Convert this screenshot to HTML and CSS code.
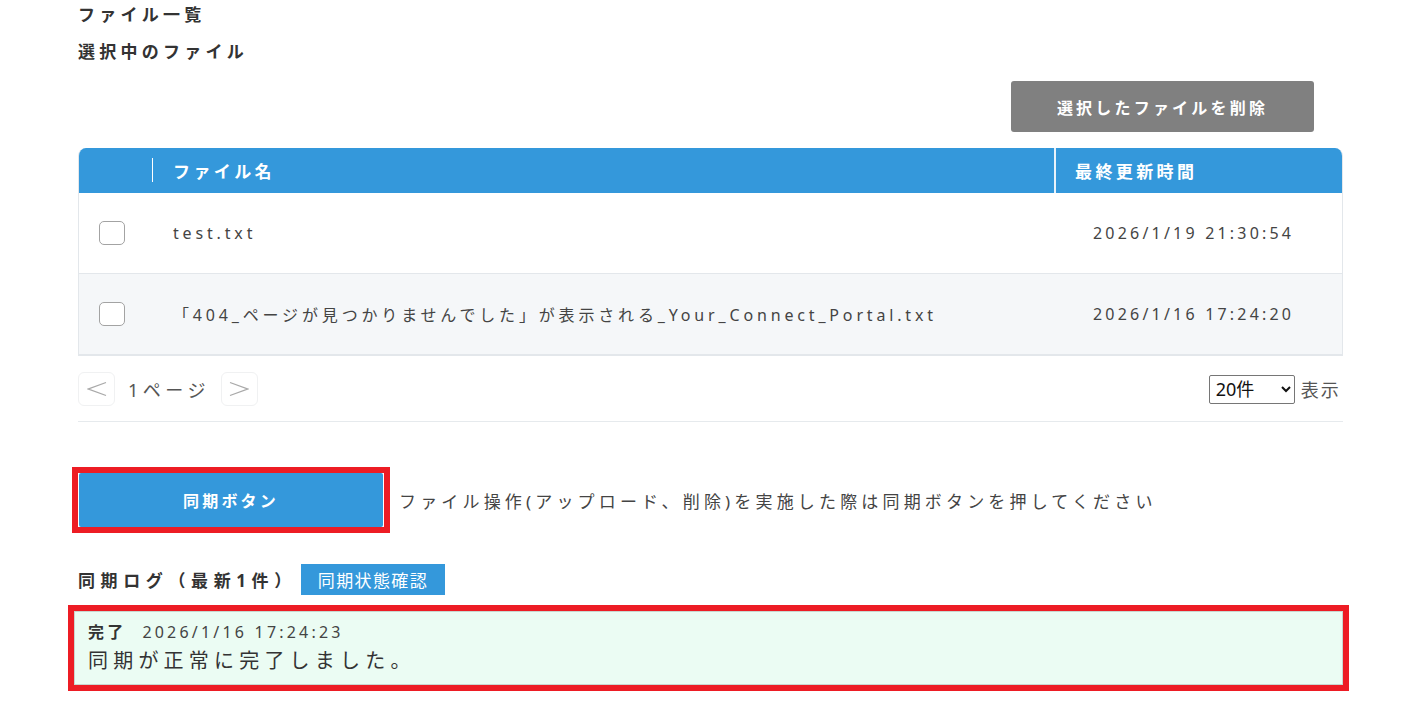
FILE: index.html
```html
<!DOCTYPE html>
<html lang="ja">
<head>
    <meta charset="UTF-8">
    <meta name="viewport" content="width=device-width, initial-scale=1.0">
    <title>ファイル一覧</title>
    <link rel="stylesheet" href="styles.css">
</head>
<body>
    <div class="page">
        <h2 class="section-title">ファイル一覧</h2>
        <h3 class="section-title sub">選択中のファイル</h3>

        <div class="actions">
            <button type="button" class="btn-delete">選択したファイルを削除</button>
        </div>

        <div class="table-wrap">
            <table class="file-table">
                <colgroup>
                    <col class="w-check">
                    <col>
                    <col class="w-date">
                </colgroup>
                <thead>
                    <tr>
                        <th class="col-check"></th>
                        <th class="col-name"><span class="divider"></span>ファイル名</th>
                        <th class="col-date">最終更新時間</th>
                    </tr>
                </thead>
                <tbody>
                    <tr>
                        <td class="col-check"><input type="checkbox" class="check"></td>
                        <td class="col-name">test.txt</td>
                        <td class="col-date">2026/1/19 21:30:54</td>
                    </tr>
                    <tr class="alt">
                        <td class="col-check"><input type="checkbox" class="check"></td>
                        <td class="col-name">「404_ページが見つかりませんでした」が表示される_Your_Connect_Portal.txt</td>
                        <td class="col-date">2026/1/16 17:24:20</td>
                    </tr>
                </tbody>
            </table>
        </div>

        <div class="pager">
            <div class="pager-left">
                <button type="button" class="page-btn">
                    <svg width="20" height="16" viewBox="0 0 20 16"><polyline points="19,1.5 1.5,8 19,14.5" fill="none" stroke="#a9a9a9" stroke-width="1.3"/></svg>
                </button>
                <span class="page-label">1ページ</span>
                <button type="button" class="page-btn">
                    <svg width="20" height="16" viewBox="0 0 20 16"><polyline points="1,1.5 18.5,8 1,14.5" fill="none" stroke="#a9a9a9" stroke-width="1.3"/></svg>
                </button>
            </div>
            <div class="pager-right">
                <select class="per-page">
                    <option>20件</option>
                    <option>50件</option>
                    <option>100件</option>
                </select>
                <span class="per-label">表示</span>
            </div>
        </div>

        <hr class="rule">

        <div class="sync-row">
            <div class="mark">
                <button type="button" class="btn-sync">同期ボタン</button>
            </div>
            <p class="sync-note">ファイル操作(アップロード、削除)を実施した際は同期ボタンを押してください</p>
        </div>

        <div class="log-head">
            <h3 class="log-title">同期ログ（最新1件）</h3>
            <button type="button" class="btn-status">同期状態確認</button>
        </div>

        <div class="log-mark">
            <div class="log-box">
                <div class="log-meta"><strong>完了</strong><span class="log-time">2026/1/16 17:24:23</span></div>
                <div class="log-msg">同期が正常に完了しました。</div>
            </div>
        </div>
    </div>
</body>
</html>
```

FILE: styles.css
```css
body {
    font-family: "Noto Sans", "Noto Sans CJK JP", sans-serif;
    color: #444;
    background-color: #ffffff;
    margin: 0;
}
.page {
    padding: 0 78px;
}
.section-title {
    font-size: 17px;
    font-weight: bold;
    color: #333;
    letter-spacing: 0.25em;
    line-height: 30px;
    margin: 0;
}
.section-title.sub {
    margin-top: 7px;
}
.actions {
    display: flex;
    justify-content: flex-end;
    margin-top: 14px;
    padding-right: 29px;
}
.btn-delete {
    width: 303px;
    height: 51px;
    background-color: #808080;
    color: #ffffff;
    border: none;
    border-radius: 3px;
    font-family: inherit;
    font-size: 16px;
    font-weight: bold;
    letter-spacing: 0.2em;
    cursor: pointer;
}

/* table */
.table-wrap {
    margin-top: 16px;
    border: 1px solid #e3e7eb;
    border-top: none;
    border-radius: 8px 8px 0 0;
    overflow: hidden;
}
.file-table {
    width: 100%;
    border-collapse: collapse;
    table-layout: fixed;
}
.w-check {
    width: 73px;
}
.w-date {
    width: 287px;
}
.file-table th {
    background-color: #3498db;
    color: #ffffff;
    font-size: 17px;
    font-weight: bold;
    letter-spacing: 0.2em;
    text-align: left;
    height: 45px;
    padding: 0;
}
.file-table th.col-name {
    position: relative;
    padding-left: 21px;
}
.divider {
    position: absolute;
    left: 0;
    top: 10px;
    width: 1px;
    height: 24px;
    background-color: #ffffff;
}
.file-table th.col-date {
    border-left: 2px solid #e8f2fa;
    padding-left: 19px;
}
.file-table td {
    height: 80px;
    padding: 0;
    font-size: 16px;
    letter-spacing: 0.24em;
    color: #444;
    border-bottom: 1px solid #e3e7eb;
}
.file-table td.col-check {
    padding-left: 20px;
}
.file-table td.col-name {
    padding-left: 21px;
}
.file-table td.col-date {
    padding-left: 38px;
    letter-spacing: 0.2em;
}
.file-table tr.alt td {
    background-color: #f5f7f9;
}
.check {
    appearance: none;
    display: block;
    width: 26px;
    height: 24px;
    margin: 0;
    border: 1.5px solid #a3a3a3;
    border-radius: 5px;
    background-color: #ffffff;
}

/* pager */
.pager {
    display: flex;
    justify-content: space-between;
    align-items: center;
    margin-top: 16px;
}
.pager-left {
    display: flex;
    align-items: center;
}
.page-btn {
    width: 37px;
    height: 34px;
    display: flex;
    align-items: center;
    justify-content: center;
    background-color: #ffffff;
    border: 1px solid #f0f1f2;
    border-radius: 6px;
    padding: 0;
}
.page-label {
    font-size: 18px;
    color: #555;
    letter-spacing: 0.25em;
    margin: 0 11px 0 13px;
}
.pager-right {
    display: flex;
    align-items: center;
    padding-right: 2px;
}
.per-page {
    width: 86px;
    height: 29px;
    font-family: inherit;
    font-size: 18px;
    color: #111;
    border: 1px solid #767676;
    border-radius: 2px;
    background-color: #ffffff;
    padding: 0 2px;
}
.per-label {
    font-size: 18px;
    color: #555;
    margin-left: 6px;
    letter-spacing: 0.12em;
}
.rule {
    border: none;
    border-top: 1px solid #e6eaed;
    margin: 15px 0 0 0;
}

/* sync */
.sync-row {
    display: flex;
    align-items: center;
    margin-top: 45px;
    margin-left: -6px;
}
.mark {
    border: 6px solid #ed1c24;
    padding: 0 1px 0 1px;
}
.btn-sync {
    display: block;
    width: 304px;
    height: 54px;
    background-color: #3498db;
    color: #ffffff;
    border: none;
    border-radius: 2px;
    font-family: inherit;
    font-size: 16px;
    font-weight: bold;
    letter-spacing: 0.2em;
    cursor: pointer;
}
.sync-note {
    margin: 0 0 0 9px;
    font-size: 17px;
    letter-spacing: 0.245em;
    color: #444;
}
.log-head {
    display: flex;
    align-items: center;
    margin-top: 31px;
}
.log-title {
    margin: 0;
    font-size: 17px;
    font-weight: bold;
    color: #333;
    letter-spacing: 0.33em;
}
.btn-status {
    margin-left: 4px;
    height: 31px;
    padding: 0 17px 0 17px;
    background-color: #3498db;
    color: #ffffff;
    border: none;
    font-family: inherit;
    font-size: 17px;
    letter-spacing: 0.08em;
}
.log-mark {
    margin: 10px -6px 0 -10px;
    border: 6px solid #ed1c24;
}
.log-box {
    background-color: #ebfcf3;
    border: 1px solid #c9d6cf;
    padding: 7px 14px 10px 13px;
}
.log-meta {
    font-size: 16px;
    letter-spacing: 0.2em;
    color: #444;
}
.log-meta strong {
    color: #333;
}
.log-time {
    margin-left: 16px;
}
.log-msg {
    font-size: 20px;
    letter-spacing: 0.26em;
    color: #333;
    margin-top: 2px;
}
```
